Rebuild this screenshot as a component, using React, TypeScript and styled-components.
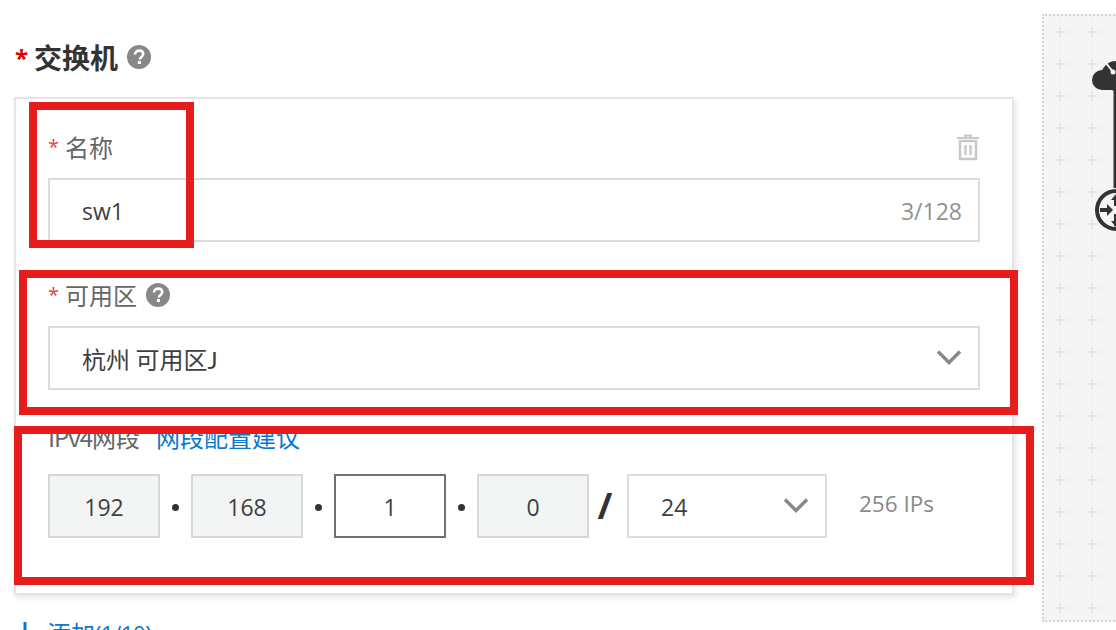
import React from "react";
import styled, { createGlobalStyle } from "styled-components";

const Global = createGlobalStyle`
  html, body { margin: 0; padding: 0; background: #fff; }
  body { width: 1116px; height: 630px; overflow: hidden; position: relative; font-family: "Open Sans", "Noto Sans CJK SC", sans-serif; }
`;

const Page = styled.div`
  width: 1116px; height: 630px; overflow: hidden; position: relative;
  display: flex; align-items: flex-start; padding: 14px 0 0 14px; box-sizing: border-box;
`;
const Left = styled.div`width: 1000px; flex: none;`;
const Title = styled.div`
  height: 83px; display: flex; align-items: center; padding-top: 3px; box-sizing: border-box;
  font: 700 28px/36px "Noto Sans CJK SC", sans-serif; color: #333;
`;
const TitleStar = styled.span`color: #e00000; font: 700 24px/36px "Open Sans", sans-serif; width: 20px; flex: none; padding-top: 2px; padding-left: 1px; box-sizing: border-box;`;
const Help = styled.svg<{ $gap: number }>`width: 24px; height: 24px; margin-left: ${p => p.$gap}px; flex: none;`;
const Card = styled.div`
  height: 498px; box-sizing: border-box; background: #fff; border: 2px solid #e5e5e5;
  box-shadow: 2px 3px 6px rgba(0,0,0,.1); padding: 0 32px 0 32px;
`;
const Label = styled.div<{ $h: number; $top?: number }>`
  height: ${p => p.$h}px; display: flex; align-items: center; position: relative; box-sizing: border-box;
  padding-top: ${p => p.$top ?? 0}px;
  font: 400 24px/32px "Noto Sans CJK SC", sans-serif; color: #666;
`;
const Star = styled.span`color: #e8443a; font: 400 20px/32px "Open Sans", sans-serif; width: 17px; flex: none;`;
const Latin = styled.span`letter-spacing: -1px;`;
const Link = styled.span`color: #0a78d0; margin-left: 16px;`;
const Trash = styled.svg`margin-left: auto; width: 24px; height: 28px;`;
const Box = styled.div<{ $w?: number; $active?: boolean; $off?: boolean }>`
  height: 64px; width: ${p => (p.$w ? p.$w + "px" : "100%")}; box-sizing: border-box; flex: none;
  border: 2px solid ${p => (p.$active ? "#707070" : p.$off ? "#d6d8d8" : "#dddddd")};
  background: ${p => (p.$off ? "#f3f5f4" : "#fff")};
  display: flex; align-items: center; justify-content: ${p => (p.$w === 112 ? "center" : "flex-start")};
  padding: ${p => (p.$w === 112 ? "2px 0 0" : "2px 16px 0 32px")};
  font: 400 23px/32px "Open Sans", "Noto Sans CJK SC", sans-serif; color: #3f3f3f;
`;
const Count = styled.span`margin-left: auto; color: #919191;`;
const Chevron = styled.svg`margin-left: auto; width: 26px; height: 16px; margin-bottom: 4px;`;
const CnValue = styled.span`font-family: "Noto Sans CJK SC", sans-serif; font-size: 24px;`;
const NarrowLetter = styled.span`font-family: Lato, sans-serif;`;
const Gap = styled.div<{ $h: number }>`height: ${p => p.$h}px;`;
const IpRow = styled.div`display: flex; align-items: center;`;
const Dot = styled.span`width: 31px; flex: none; display: flex; justify-content: center; &::before { content: ""; width: 7px; height: 7px; border-radius: 50%; background: #333; margin-top: 2px; }`;
const Slash = styled.span`width: 38px; flex: none; box-sizing: border-box; padding-right: 6px; text-align: center; font: 700 36px/40px "Open Sans", sans-serif; color: #333;`;
const Ips = styled.span`margin-left: 32px; font: 400 22.5px/32px "Open Sans", sans-serif; color: #8a8a8a; padding-bottom: 4px;`;
const Add = styled.div`
  display: flex; align-items: center; margin-top: 22px; height: 32px;
  font: 400 24px/32px "Noto Sans CJK SC", sans-serif; color: #0a78d0;
`;
const AddCount = styled.span`font-family: "Open Sans", sans-serif; font-size: 22px; letter-spacing: -0.4px;`;
const Plus = styled.svg`width: 22px; height: 22px; margin-right: 11px; margin-left: 0;`;
const Canvas = styled.div`
  width: 120px; height: 608px; margin-left: 28px; flex: none; position: relative; overflow: hidden;
  box-sizing: border-box; border: 2px dotted #d4d4d4; background: #f5f5f5;
`;
const Drawing = styled.svg`width: 120px; height: 608px; display: block;`;
const Mark = styled.div<{ $x: number; $y: number; $w: number; $h: number }>`
  position: absolute; left: ${p => p.$x}px; top: ${p => p.$y}px; width: ${p => p.$w}px; height: ${p => p.$h}px;
  box-sizing: border-box; border: 8px solid #e71c1c; pointer-events: none;
`;

const HelpIcon = ({ gap }: { gap: number }) => (
  <Help $gap={gap} viewBox="0 0 24 24">
    <circle cx="12" cy="12" r="12" fill="#888" />
    <path d="M8 9.500C8 7 9.800 5.600 12.200 5.600S16.200 7 16.200 9.100c0 3-3.300 2.900-3.300 5.400" fill="none" stroke="#fff" strokeWidth="2.600" />
    <rect x="10.900" y="16" width="3" height="3" fill="#fff" />
  </Help>
);

const Down = () => (
  <Chevron viewBox="0 0 26 16"><path d="M2 2.500 13 13.500 24 2.500" fill="none" stroke="#888" strokeWidth="3.400" /></Chevron>
);

export default function App() {
  return (
    <Page>
      <Global />
      <Left>
        <Title><TitleStar>*</TitleStar>交换机<HelpIcon gap={9} /></Title>
        <Card>
          <Label $h={79} $top={16}>
            <Star>*</Star>名称
            <Trash viewBox="0 0 24 28">
              <path d="M1 5h22M9 4V2.500h6V4" stroke="#c8c8c8" strokeWidth="2" fill="none" />
              <path d="M4 8h16v18H4zM9.500 12v10M14.500 12v10" stroke="#c8c8c8" strokeWidth="2.400" fill="none" />
            </Trash>
          </Label>
          <Box>sw1<Count>3/128</Count></Box>
          <Label $h={84} $top={22}><Star>*</Star>可用区<HelpIcon gap={9} /></Label>
          <Box><CnValue>杭州 可用区<NarrowLetter>J</NarrowLetter></CnValue><Down /></Box>
          <Gap $h={33} />
          <Label $h={28}><Latin>IPv4</Latin>网段<Link>网段配置建议</Link></Label>
          <Gap $h={23} />
          <IpRow>
            <Box $w={112} $off>192</Box>
            <Dot />
            <Box $w={112} $off>168</Box>
            <Dot />
            <Box $w={112} $active>1</Box>
            <Dot />
            <Box $w={112} $off>0</Box>
            <Slash>/</Slash>
            <Box $w={200}>24<Down /></Box>
            <Ips>256 IPs</Ips>
          </IpRow>
        </Card>
        <Add>
          <Plus viewBox="0 0 22 22"><path d="M11 0v22M0 11h22" stroke="#0a78d0" strokeWidth="3" /></Plus>
          添加<AddCount>(1/10)</AddCount>
        </Add>
      </Left>
      <Canvas>
        <Drawing viewBox="0 0 120 608">
          <defs>
            <pattern id="grid" x="0" y="0" width="32" height="32" patternUnits="userSpaceOnUse">
              <path d="M0 16h32M16 0v32" stroke="#e6e6e6" strokeWidth="1" strokeDasharray="1 2" />
              <path d="M11 16h10M16 11v10" stroke="#dddddd" strokeWidth="1" />
            </pattern>
          </defs>
          <rect width="120" height="608" fill="url(#grid)" />
          <circle cx="58" cy="64" r="10" fill="#333" />
          <circle cx="72" cy="60" r="15" fill="#333" />
          <rect x="58" y="62" width="16" height="12" fill="#333" />
          <path d="M62 47 69 56" stroke="#f5f5f5" strokeWidth="2" />
          <circle cx="69" cy="56" r="2.500" fill="#f5f5f5" />
          <path d="M71 74V172" stroke="#333" strokeWidth="3" />
          <circle cx="72" cy="194" r="19" fill="#f5f5f5" stroke="#333" strokeWidth="4" />
          <path d="M56 194h8" stroke="#333" strokeWidth="4" />
          <path d="M63 188l6 6-6 6z" fill="#333" />
          <path d="M72 182v8M72 198v12" stroke="#333" strokeWidth="4" />
          <path d="M67 184l5-6 5 6zM67 205l5 6 5-6z" fill="#333" />
        </Drawing>
      </Canvas>
      <Mark $x={29} $y={102} $w={165} $h={146} />
      <Mark $x={19} $y={270} $w={999} $h={145} />
      <Mark $x={14} $y={426} $w={1020} $h={159} />
    </Page>
  );
}
